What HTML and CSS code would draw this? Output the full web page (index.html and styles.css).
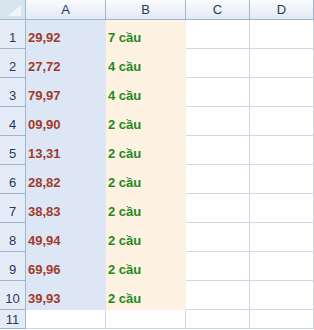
FILE: index.html
```html
<!DOCTYPE html>
<html>
<head>
<meta charset="utf-8">
<link rel="stylesheet" href="styles.css">
</head>
<body>
<div class="sheet">
  <div class="corner"><svg width="14" height="12" viewBox="0 0 14 12"><polygon points="13,0 13,11 0,11" fill="#f1f4f9"/></svg></div>
  <div class="ch">A</div><div class="ch">B</div><div class="ch">C</div><div class="ch">D</div>

  <div class="rh">1</div><div class="c a">29,92</div><div class="c b">7 cầu</div><div class="c"></div><div class="c"></div>
  <div class="rh">2</div><div class="c a">27,72</div><div class="c b">4 cầu</div><div class="c"></div><div class="c"></div>
  <div class="rh">3</div><div class="c a">79,97</div><div class="c b">4 cầu</div><div class="c"></div><div class="c"></div>
  <div class="rh">4</div><div class="c a">09,90</div><div class="c b">2 cầu</div><div class="c"></div><div class="c"></div>
  <div class="rh">5</div><div class="c a">13,31</div><div class="c b">2 cầu</div><div class="c"></div><div class="c"></div>
  <div class="rh">6</div><div class="c a">28,82</div><div class="c b">2 cầu</div><div class="c"></div><div class="c"></div>
  <div class="rh">7</div><div class="c a">38,83</div><div class="c b">2 cầu</div><div class="c"></div><div class="c"></div>
  <div class="rh">8</div><div class="c a">49,94</div><div class="c b">2 cầu</div><div class="c"></div><div class="c"></div>
  <div class="rh">9</div><div class="c a">69,96</div><div class="c b">2 cầu</div><div class="c"></div><div class="c"></div>
  <div class="rh">10</div><div class="c a">39,93</div><div class="c b">2 cầu</div><div class="c"></div><div class="c"></div>
  <div class="rh short">11</div><div class="c short"></div><div class="c short"></div><div class="c short"></div><div class="c short"></div>
</div>
</body>
</html>
```

FILE: styles.css
```css
html, body {
  margin: 0;
  padding: 0;
  background: #ffffff;
}
.sheet {
  display: grid;
  grid-template-columns: 26px 80px 80px 64px 64px;
  grid-template-rows: 20px repeat(10, 29px) 19px;
  font-family: "Liberation Sans", Arial, sans-serif;
  font-size: 13px;
  line-height: 15px;
}
.corner {
  background: #d9e4f1;
  border-right: 1px solid #9eb6ce;
  border-bottom: 1px solid #9eb6ce;
  display: flex;
  justify-content: flex-end;
  align-items: flex-end;
  padding: 0 3px 2px 0;
}
.corner svg { display: block; }
.ch {
  background: linear-gradient(#f9fbfd, #e3eaf4);
  border-right: 1px solid #9eb6ce;
  border-bottom: 1px solid #9eb6ce;
  color: #27395a;
  display: flex;
  justify-content: center;
  align-items: flex-end;
  padding-bottom: 2px;
}
.rh {
  background: #e4ecf7;
  border-right: 1px solid #9eb6ce;
  border-bottom: 1px solid #9eb6ce;
  color: #27395a;
  display: flex;
  justify-content: center;
  align-items: flex-end;
  padding-bottom: 3px;
}
.c {
  border-right: 1px solid #d0d7e5;
  border-bottom: 1px solid #d0d7e5;
  display: flex;
  align-items: flex-end;
  padding: 0 0 3px 2px;
  font-weight: bold;
}
.a {
  background: #dce6f4;
  border-color: #dce6f4;
  border-right-color: #dce6f4;
  color: #a23a2a;
}
.b {
  background: #fdf1e1;
  border-color: #fdf1e1;
  color: #238a1a;
}
.short {
  padding-bottom: 1px;
}
```
